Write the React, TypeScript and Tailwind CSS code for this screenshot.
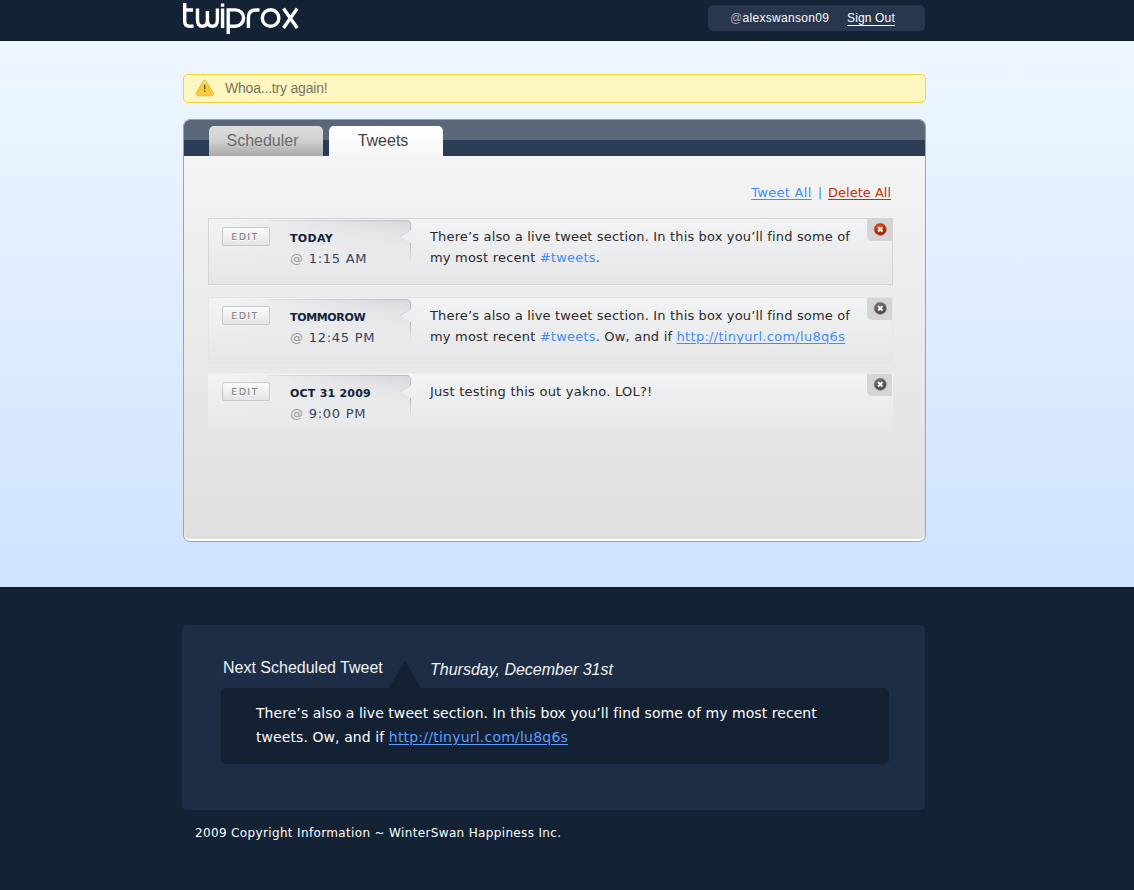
import type { ReactNode } from "react";

function Logo() {
  return (
    <svg width="120" height="38" viewBox="182 0 120 38" fill="none" stroke="#fff" strokeWidth="3.4">
      <path d="M184.7 3V21.5Q184.7 26.2 189.4 26.2H193.5M183 10H193" />
      <path d="M197.5 8.5V20Q197.5 26.2 202.400 26.2Q207.4 26.2 207.4 20V11M207.4 20Q207.4 26.2 212.4 26.2Q217.4 26.2 217.4 20V8.5" />
      <path d="M222.6 8.500V28M222.6 3.5V6.8" />
      <path d="M228.2 34V9.900H235.5A8.100 8.150 0 0 1 235.5 26.200H229" />
      <path d="M248.4 28V17.5Q248.4 10 256 10H259.5" />
      <circle cx="270.6" cy="18" r="8.3" />
      <path d="M283.500 8.500L297.200 28M297.200 8.500L283.500 28" />
    </svg>
  );
}

function Warning() {
  return (
    <svg className="-mt-px" width="20" height="18" viewBox="0 0 20 18">
      <defs>
        <linearGradient id="warn" x1="0" y1="0" x2="0" y2="1">
          <stop offset="0" stopColor="#ffe98a" />
          <stop offset="0.6" stopColor="#fbc926" />
          <stop offset="1" stopColor="#f6d050" />
        </linearGradient>
      </defs>
      <path d="M2 16.8H18" stroke="#c8bd8a" strokeWidth="1.5" opacity=".7" />
      <path d="M8.6 1.6Q9.7 0.2 10.8 1.6L18.3 14Q18.8 15.8 17 15.9H2.4Q.8 15.8 1.3 14Z" fill="url(#warn)" stroke="#e8b535" />
      <path d="M9.7 5.5V10.3M9.7 11.5V13" stroke="#6b5a1e" strokeWidth="1.4" />
    </svg>
  );
}

function CloseButton({ active }: { active?: boolean }) {
  const id = active ? "close-active" : "close-idle";
  return (
    <button aria-label="Delete" className="flex h-[22px] w-[25px] shrink-0 items-start justify-center rounded-bl-[5px] bg-[#d5d5d6] pt-[3px]">
      <svg width="14" height="14" viewBox="0 0 14 14">
        <defs>
          <radialGradient id={id} cx=".4" cy=".3" r=".75">
            <stop offset="0" stopColor={active ? "#f0501c" : "#777"} />
            <stop offset="1" stopColor={active ? "#951500" : "#404040"} />
          </radialGradient>
        </defs>
        <circle cx="7.3" cy="7.3" r="6.100" fill={`url(#${id})`} stroke={active ? "#c96a55" : "#a88f8c"} strokeWidth=".7" />
        <path d="M5.100 5.100L9.500 9.500M9.500 5.100L5.100 9.500" stroke="#fff" strokeWidth="1.9" />
      </svg>
    </button>
  );
}

function Flap() {
  return (
    <svg className="block" width="204" height="46" viewBox="0 0 204 46">
      <defs>
        <linearGradient id="flapShade" x1="0" y1="0" x2="0" y2="1">
          <stop offset="0" stopColor="#d3d5d9" />
          <stop offset="0.3" stopColor="#dedfe2" stopOpacity=".8" />
          <stop offset="1" stopColor="#e6e6e8" stopOpacity="0" />
        </linearGradient>
        <linearGradient id="flapMask" x1="0" y1="0" x2="1" y2="0">
          <stop offset="0.1" stopColor="#000" />
          <stop offset="1" stopColor="#fff" />
        </linearGradient>
        <linearGradient id="flapEdge" x1="0" y1="0" x2="0" y2="1">
          <stop offset="0" stopColor="#b4b7bd" />
          <stop offset="1" stopColor="#b4b7bd" stopOpacity="0" />
        </linearGradient>
        <mask id="flapFade">
          <rect width="204" height="46" fill="url(#flapMask)" />
        </mask>
      </defs>
      <path d="M0 1H197Q202 1 202 6V11L191 17.500L202 24V46H0Z" fill="url(#flapShade)" mask="url(#flapFade)" />
      <path d="M60 1.500H197Q201.500 1.500 201.500 6V11" stroke="#b9bcc2" fill="none" mask="url(#flapFade)" />
      <path d="M202 11L191 17.500L202 24Z" fill="#eeeff3" />
      <path d="M202 11L191 17.500" stroke="#d0d2d7" />
      <rect x="201" y="24" width="1" height="19" fill="url(#flapEdge)" />
    </svg>
  );
}

interface TweetProps {
  day: string;
  daySpacing: string;
  time: string;
  box: string;
  active?: boolean;
  children: ReactNode;
}

function Tweet({ day, daySpacing, time, box, active, children }: TweetProps) {
  return (
    <article className={`relative flex w-[685px] bg-linear-to-b from-[#f2f3f5] ${box}`}>
      <div className="absolute top-0 left-0">
        <Flap />
      </div>
      <div className="relative w-[81px] shrink-0 pt-[8px] pl-[13px]">
        <button className="flex h-[19px] w-[48px] items-center justify-center rounded-[2px] border border-[#c9c9cb] bg-linear-to-b from-[#fbfbfc] to-[#e4e4e5] pt-px pr-[2px] text-[9.500px] tracking-[1.350px] text-[#777] [text-shadow:0_1px_0_#fff]">
          EDIT
        </button>
      </div>
      <div className="relative w-[140px] shrink-0 pt-[10px] whitespace-nowrap">
        <h3 className={`text-[11px] leading-[20px] font-bold text-[#10223a] ${daySpacing}`}>{day}</h3>
        <p className="text-[13px] leading-[20px] tracking-[0.750px] text-[#34435f]">
          <span className="text-[#999]">@</span> {time}
        </p>
      </div>
      <div className="grow pt-[7px] text-[13px] leading-[21px] whitespace-nowrap text-[#2a2a2a]">{children}</div>
      <CloseButton active={active} />
    </article>
  );
}

export default function App() {
  return (
    <div className="flex h-[890px] w-[1134px] flex-col overflow-hidden bg-[#132235] font-['DejaVu_Sans',sans-serif]">
      <header className="flex h-[41px] shrink-0 border-b border-[#0d1b2b] pl-[182px]">
        <Logo />
        <nav className="mt-[5px] ml-[406px] flex h-[26px] w-[217px] items-center rounded-[5px] bg-[#28364e] pl-[22px] font-['Liberation_Sans',sans-serif] text-[12px] whitespace-nowrap text-white">
          <span className="w-[117px] tracking-[0.300px]">
            <span className="text-[#aaa]">@</span>alexswanson09
          </span>
          <a className="mt-px border-b border-white leading-[13px] tracking-[0.150px]">Sign Out</a>
        </nav>
      </header>

      <main className="h-[546px] shrink-0 bg-linear-to-b from-[#eff7ff] to-[#cfe2ff] pt-[33px] pl-[183px]">
        <div className="flex h-[29px] w-[743px] items-center rounded-[5px] border border-[#f3d33c] bg-[#fff6c0] pl-[11px]">
          <Warning />
          <span className="ml-[10px] font-['Liberation_Sans',sans-serif] text-[14px] tracking-[-0.200px] text-[#77745f]">Whoa...try again!</span>
        </div>

        <section className="mt-[16px] h-[423px] w-[743px] overflow-hidden rounded-[7px] border border-[#98a4b5] bg-linear-to-b from-[#f6f6f6] to-[#dfdfe0] shadow-[inset_0_-2px_0_#fff]">
          <div className="flex h-[36px] gap-[6px] bg-linear-to-b from-[#596779] from-[20px] to-[#2c3c54] to-[20px] pt-[6px] pl-[25px] font-['Liberation_Sans',sans-serif] text-[16px]">
            <a className="flex h-[30px] w-[114px] items-center justify-center rounded-t-[5px] bg-linear-to-b from-[#dedede] via-[#d0d0d0] to-[#aaa8aa] pr-[7px] pb-px text-[#6b6b6b]">Scheduler</a>
            <a className="flex h-[30px] w-[114px] items-center justify-center rounded-t-[5px] bg-linear-to-b from-white to-[#f6f6f6] pr-[6px] pb-px text-[#444]">Tweets</a>
          </div>
          <div className="flex h-[62px] justify-end pt-[27px] pr-[34px] text-[13px] leading-[20px] whitespace-nowrap text-[#438df5]">
            <a className="tracking-[0.300px] underline underline-offset-2">Tweet All</a>
            <span className="px-[6px]">|</span>
            <a className="text-[#c13007] underline underline-offset-2">Delete All</a>
          </div>
          <div className="flex flex-col pl-[24px]">
            <Tweet active day="TODAY" daySpacing="tracking-[0.300px]" time="1:15 AM" box="h-[67px] border border-[#d4d4d5] to-[#e6e6e7]">
              <p className="tracking-[0.155px]">There’s also a live tweet section. In this box you’ll find some of</p>
              <p className="tracking-[0.200px]">my most recent <a className="text-[#438df5]">#tweets</a>.</p>
            </Tweet>
            <Tweet day="TOMMOROW" daySpacing="tracking-[-0.350px]" time="12:45 PM" box="mt-[12px] h-[67px] border border-[#e5e5e6] to-[#e6e6e7]">
              <p className="tracking-[0.155px]">There’s also a live tweet section. In this box you’ll find some of</p>
              <p className="tracking-[0.200px]">
                my most recent <a className="text-[#438df5]">#tweets</a>. Ow, and if <a className="tracking-[0.290px] text-[#438df5] underline underline-offset-2">http://tinyurl.com/lu8q6s</a>
              </p>
            </Tweet>
            <Tweet day="OCT 31 2009" daySpacing="tracking-[0.220px]" time="9:00 PM" box="mt-[9px] h-[58px] border-x border-t border-[#ececed] border-x-transparent to-[#e7e7e8]">
              <p className="tracking-[0.240px]">Just testing this out yakno. LOL?!</p>
            </Tweet>
          </div>
        </section>
      </main>

      <footer className="grow border-t-2 border-[#101c29] pt-[36px] pl-[182px] text-white">
        <section className="h-[185px] w-[743px] rounded-[5px] bg-[#1d2d46] pl-[39px]">
          <div className="flex h-[63px] pt-[33px] font-['Liberation_Sans',sans-serif] text-[16px] leading-[20px] whitespace-nowrap text-[#f2f2f2]">
            <h2 className="w-[167px] pl-[2px]">Next Scheduled Tweet</h2>
            <svg className="mt-[3px] shrink-0" width="34" height="27" viewBox="0 0 34 27">
              <path d="M1 27L17 0L33 27Z" fill="#132133" />
            </svg>
            <em className="pt-[2px] pl-[8px]">Thursday, December 31st</em>
          </div>
          <div className="h-[76px] w-[668px] rounded-[5px] bg-[#132133] pt-[13px] pl-[35px] text-[14px] leading-[24px] whitespace-nowrap">
            <p className="tracking-[0.055px]">There’s also a live tweet section. In this box you’ll find some of my most recent</p>
            <p className="tracking-[0.080px]">tweets. Ow, and if <a className="tracking-[0.220px] text-[#5c9dff] underline underline-offset-2">http://tinyurl.com/lu8q6s</a></p>
          </div>
        </section>
        <p className="mt-[13px] pl-[13px] text-[12px] leading-[20px] tracking-[0.350px]">2009 Copyright Information ~ WinterSwan Happiness Inc.</p>
      </footer>
    </div>
  );
}
